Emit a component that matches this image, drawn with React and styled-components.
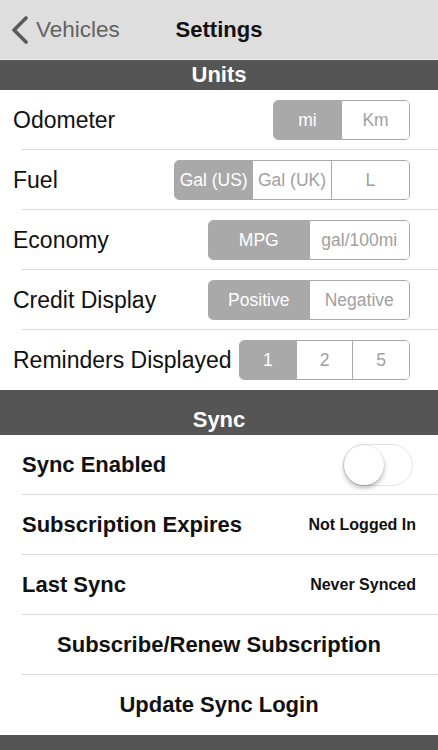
import React from "react";
import styled, { createGlobalStyle } from "styled-components";

const Global = createGlobalStyle`
  body {
    margin: 0;
    background: #fff;
    font-family: "Liberation Sans", Arial, sans-serif;
  }
`;

const units = [
  { label: "Odometer", width: 137, options: ["mi", "Km"] },
  { label: "Fuel", width: 236, options: ["Gal (US)", "Gal (UK)", "L"] },
  { label: "Economy", width: 202, options: ["MPG", "gal/100mi"] },
  { label: "Credit Display", width: 202, options: ["Positive", "Negative"] },
  { label: "Reminders Displayed", width: 171, options: ["1", "2", "5"] },
];

export default function App() {
  return (
    <>
      <Global />
      <Page>
        <NavBar>
          <Back>
            <svg width="18" height="28" viewBox="0 0 18 28">
              <polyline points="15,2 3,14 15,26" fill="none" stroke="#5a5a5a" strokeWidth="3.6" strokeLinecap="round" strokeLinejoin="round" />
            </svg>
            <span>Vehicles</span>
          </Back>
          <Title>Settings</Title>
          <div />
        </NavBar>

        <SectionHeader>Units</SectionHeader>
        <List>
          {units.map((u) => (
            <UnitRow key={u.label}>
              <Label>{u.label}</Label>
              <Segmented $w={u.width}>
                {u.options.map((o, i) => (
                  <Segment key={o} $on={i === 0}>{o}</Segment>
                ))}
              </Segmented>
            </UnitRow>
          ))}
        </List>

        <SectionHeader $tall>Sync</SectionHeader>
        <List>
          <SyncRow>
            <BoldLabel>Sync Enabled</BoldLabel>
            <Toggle>
              <Knob />
            </Toggle>
          </SyncRow>
          <SyncRow>
            <BoldLabel>Subscription Expires</BoldLabel>
            <Detail>Not Logged In</Detail>
          </SyncRow>
          <SyncRow>
            <BoldLabel>Last Sync</BoldLabel>
            <Detail>Never Synced</Detail>
          </SyncRow>
          <SyncRow $center>
            <BoldLabel>Subscribe/Renew Subscription</BoldLabel>
          </SyncRow>
          <SyncRow $center>
            <BoldLabel>Update Sync Login</BoldLabel>
          </SyncRow>
        </List>
        <FooterBar />
      </Page>
    </>
  );
}

const Page = styled.div`
  width: 438px;
  height: 750px;
  overflow: hidden;
  display: flex;
  flex-direction: column;
`;

const NavBar = styled.div`
  height: 59px;
  border-bottom: 1px solid #ececec;
  background: #dedede;
  display: grid;
  grid-template-columns: 1fr auto 1fr;
  align-items: center;
`;

const Back = styled.div`
  display: flex;
  align-items: center;
  gap: 7px;
  padding-left: 11px;
  color: #636363;
  font-size: 22.5px;
  svg {
    margin-top: 1px;
  }
`;

const Title = styled.div`
  font-weight: bold;
  font-size: 22px;
  color: #111;
`;

const SectionHeader = styled.div`
  background: #555555;
  color: #fff;
  font-weight: bold;
  font-size: 22px;
  text-align: center;
  height: ${(p) => (p.$tall ? "45px" : "30px")};
  line-height: ${(p) => (p.$tall ? "22px" : "30px")};
  padding-top: ${(p) => (p.$tall ? "19px" : "0")};
  box-sizing: border-box;
`;

const List = styled.div`
  display: flex;
  flex-direction: column;
`;

const Row = styled.div`
  height: 60px;
  display: flex;
  align-items: center;
  box-sizing: border-box;
  &:not(:last-child) {
    background: linear-gradient(#dcdcdc, #dcdcdc) no-repeat left 22px bottom / calc(100% - 22px) 1px;
  }
`;

const UnitRow = styled(Row)`
  justify-content: space-between;
  padding: 0 28px 0 13px;
`;

const SyncRow = styled(Row)`
  justify-content: ${(p) => (p.$center ? "center" : "space-between")};
  padding: 0 22px;
`;

const Label = styled.div`
  font-size: 23px;
  color: #111;
`;

const BoldLabel = styled.div`
  font-size: 22px;
  font-weight: bold;
  color: #111;
`;

const Detail = styled.div`
  font-size: 16px;
  font-weight: bold;
  color: #111;
`;

const Segmented = styled.div`
  width: ${(p) => p.$w}px;
  height: 40px;
  box-sizing: border-box;
  border: 1px solid #a9a9a9;
  border-radius: 5px;
  overflow: hidden;
  display: flex;
`;

const Segment = styled.div`
  flex: 1;
  display: flex;
  align-items: center;
  justify-content: center;
  font-size: 17.5px;
  white-space: nowrap;
  background: ${(p) => (p.$on ? "#a9a9a9" : "#fff")};
  color: ${(p) => (p.$on ? "#fff" : "#a0a0a0")};
  & + & {
    border-left: 1px solid #a9a9a9;
  }
`;

const Toggle = styled.div`
  width: 70px;
  height: 42px;
  margin-right: 3px;
  box-sizing: border-box;
  border: 1.5px solid #e4e4e4;
  border-radius: 21px;
  background: #fff;
  display: flex;
  align-items: center;
`;

const Knob = styled.div`
  width: 40px;
  height: 40px;
  border-radius: 50%;
  background: #fff;
  box-shadow: 0 3px 5px rgba(0, 0, 0, 0.28), 0 0 0 0.5px rgba(0, 0, 0, 0.12);
`;

const FooterBar = styled.div`
  height: 15px;
  background: #555555;
`;
